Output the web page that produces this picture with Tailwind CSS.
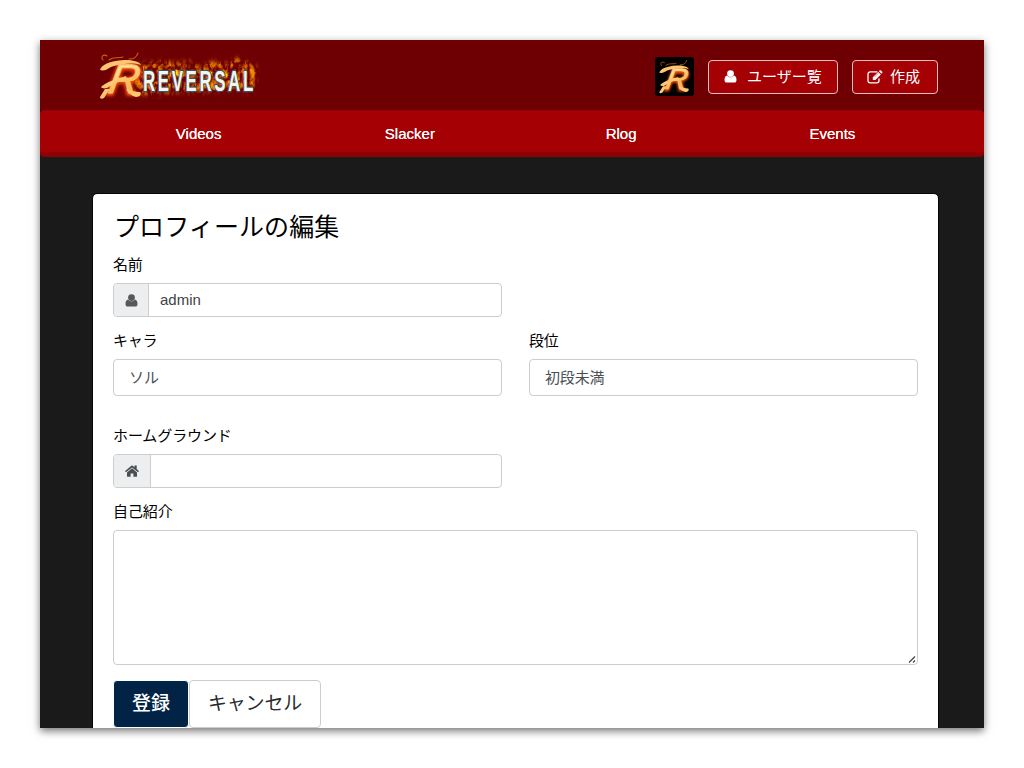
<!DOCTYPE html>
<html lang="ja">
<head>
<meta charset="utf-8">
<title>プロフィールの編集 - REVERSAL</title>
<script src="https://cdn.jsdelivr.net/npm/@tailwindcss/browser@4"></script>
</head>
<body class="h-[768px] overflow-hidden bg-white p-10 font-['Liberation_Sans','Noto_Sans_CJK_JP',sans-serif] text-[15px] text-black">
<svg width="0" height="0" class="absolute">
  <defs>
    <linearGradient id="fire" x1="0" y1="0" x2="0.3" y2="1"><stop offset="0" stop-color="#ffb04c"/><stop offset=".35" stop-color="#ffe09a"/><stop offset=".65" stop-color="#ffc060"/><stop offset="1" stop-color="#ffab48"/></linearGradient>
    <filter id="glow" x="-30%" y="-30%" width="160%" height="160%"><feGaussianBlur stdDeviation="1.8"/></filter>
    <filter id="flames" x="-10%" y="-20%" width="120%" height="140%" color-interpolation-filters="sRGB">
      <feTurbulence type="turbulence" baseFrequency="0.13 0.09" numOctaves="3" seed="8" result="n"/>
      <feColorMatrix in="n" type="matrix" values=".8 0 0 0 .58  1 0 0 0 .1  0 0 0 0 .01  0 0 0 3.500 -.55" result="c"/>
      <feGaussianBlur in="SourceAlpha" stdDeviation="2.5" result="m"/>
      <feComposite in="c" in2="m" operator="in"/>
    </filter>
    <symbol id="emblem" viewBox="0 0 46 50">
      <g fill="none" stroke="#c9600f" stroke-linecap="round" stroke-width="1.100">
        <path d="M5 9C2 5 6 3 9 5M11 9C16 5 19 8 25 6M31 8C36 8 38 7 40 2"/>
      </g>
      <g transform="translate(7 43) skewX(-10)">
        <text x="2" y="0" font-family="Liberation Sans, sans-serif" font-size="41" font-style="italic" textLength="30" lengthAdjust="spacingAndGlyphs" fill="#f04a08" stroke="#f04a08" stroke-width="4" filter="url(#glow)" aria-hidden="true">R</text>
        <text x="2" y="-1" font-family="Liberation Sans, sans-serif" font-size="41" font-style="italic" textLength="30" lengthAdjust="spacingAndGlyphs" fill="url(#fire)" stroke="#ffc670" stroke-width="1">R</text>
      </g>
      <path fill="#ffc470" d="M2 19C3 14 11 10 26 9c9-.5 16 2 17 5-9-3-18-1-27 1-5 1-8 6-14 4Z"/>
      <path fill="#ffc870" d="M4 35C12 29 21 28 28 25l1 3c-7 2-14 5-20 9-4 1-7 0-5-2ZM2 46l5-8 5 0-6 9c-2 1-4 1-4-1ZM28 38c5 1 9 3 14 3 2 2 0 5-4 5-4-1-8-4-10-8Z"/>
    </symbol>
    <symbol id="user" viewBox="0 0 13 15"><g fill="currentColor"><circle cx="6.5" cy="4.6" r="3.4"/><path d="M3.1 6.5C1.3 6.7.5 8.6.5 11c0 1.7.8 2.6 2.2 2.6h7.6c1.4 0 2.2-.9 2.2-2.6 0-2.4-.8-4.3-2.6-4.5-1.8 2.4-5 2.4-6.8 0Z"/></g></symbol>
  </defs>
</svg>
<div class="flex h-[688px] w-[944px] flex-col overflow-hidden bg-[#1a1a1a] shadow-[0_3px_8px_rgba(0,0,0,0.55)]">
  <header class="flex h-[70px] shrink-0 items-center bg-[#6e0004] pt-[3px] pr-[46px] pl-[55px]">
    <svg class="-mt-[3px]" width="170" height="56" viewBox="0 0 170 56" role="img" aria-label="REVERSAL">
      <path fill="#fff" filter="url(#flames)" d="M38 22 50 15 61 17 71 12 81 16 93 14 105 20 115 13 130 16 144 10 159 15 162 27 158 45 145 41 118 45 86 45 55 48 35 46Z"/>
      <use href="#emblem" x="3" y="4" width="46" height="50"/>
      <g transform="translate(48 43.500) scale(.58 1)"><text x="0" y="0" font-family="Liberation Sans, sans-serif" font-size="29" font-weight="700" textLength="190" lengthAdjust="spacing" fill="#f4f4f1" stroke="#40535c" stroke-width="2.400" paint-order="stroke">REVERSAL</text></g>
    </svg>
    <div class="ml-auto flex h-[39px] w-[39px] items-center justify-center rounded-[3px] bg-black"><svg width="35" height="36"><use href="#emblem" width="35" height="36"/></svg></div>
    <button class="ml-[14px] flex h-[34px] w-[130px] items-center rounded border border-[#e4bfc0] bg-[#a50004] pl-[15px] text-white">
      <svg width="13" height="15"><use href="#user"/></svg>
      <span class="ml-[10px] pt-[2px] whitespace-nowrap">ユーザー覧</span>
    </button>
    <button class="ml-[14px] flex h-[34px] w-[86px] items-center rounded border border-[#e4bfc0] bg-[#a50004] pl-[14px] text-white">
      <svg class="mr-px" width="16" height="14" viewBox="0 0 16 14" fill="none" stroke="currentColor"><path stroke-width="1.3" stroke-linecap="round" d="M10 1.8H3.2A2.2 2.2 0 0 0 1 4v6.6a2.2 2.2 0 0 0 2.2 2.2h6.6a2.2 2.2 0 0 0 2.2-2.2V9"/><path fill="currentColor" stroke="none" d="M5.800 7.300 11.200 1.900l2.600 2.600-5.400 5.400H5.800ZM11.900 1.200l.7-.7c.4-.4 1-.4 1.400 0l1.200 1.200c.4.4.4 1 0 1.400l-.7.7Z"/><path stroke="#a50004" stroke-width=".5" d="m7.600 7 3.700-3.700"/></svg>
      <span class="ml-[6px] pt-[2px] whitespace-nowrap">作成</span>
    </button>
  </header>
  <nav class="grid h-[47px] shrink-0 grid-cols-4 rounded-[4px] border-t border-b-[5px] border-t-[#970004] border-b-[#8e0004] bg-[#a50004] pr-[46px] pl-[53px] text-center leading-[45px] text-white [text-shadow:0_0_0.5px_white]">
    <a>Videos</a><a>Slacker</a><a>Rlog</a><a>Events</a>
  </nav>
  <main class="mx-[53px] mt-[37px] h-[560px] w-[845px] shrink-0 rounded bg-white px-[20px] pt-[16px] outline outline-black/80">
    <h1 class="h-[45px] pl-px text-[25px] leading-[34px] tracking-[0.1px]">プロフィールの編集</h1>
    <form class="grid grid-cols-[389px_389px] gap-x-[27px]">
      <div class="col-span-2 h-[76px]">
        <label class="block h-[28px] leading-[20px] tracking-[-0.15px]">名前</label>
        <div class="flex h-[34px] w-[389px] overflow-hidden rounded border border-[#cccdce]">
          <span class="flex w-[35px] items-center justify-center border-r border-[#cccdce] bg-[#eceeef] text-[#55595c]"><svg width="13" height="15"><use href="#user"/></svg></span>
          <span class="pl-[11px] leading-[32px] text-[#3e4246]">admin</span>
        </div>
      </div>
      <div class="h-[95px]">
        <label class="block h-[28px] leading-[20px] tracking-[-0.3px]">キャラ</label>
        <div class="h-[37px] rounded border border-[#cccdce] pl-[15px] leading-[35px] text-[#4b5056]">ソル</div>
      </div>
      <div class="h-[95px]">
        <label class="block h-[28px] leading-[20px] tracking-[-0.15px]">段位</label>
        <div class="h-[37px] rounded border border-[#cccdce] pl-[15px] leading-[35px] tracking-[-0.15px] text-[#4b5056]">初段未満</div>
      </div>
      <div class="col-span-2 h-[76px]">
        <label class="block h-[28px] leading-[20px] tracking-[-0.1px]">ホームグラウンド</label>
        <div class="flex h-[34px] w-[389px] overflow-hidden rounded border border-[#cccdce]">
          <span class="flex w-[37px] items-center justify-center border-r border-[#cccdce] bg-[#eceeef] text-[#4a4e51]"><svg width="14" height="12" viewBox="0 0 14 12" fill="currentColor"><path d="M7 3.3 2 7.4v3.8c0 .4.2.6.6.6h3V8.4h2.8v3.4h3c.4 0 .6-.2.6-.6V7.4Z"/><path d="m.2 6.400.6.7c.2.1.3.1.5 0L7 2.400l5.700 4.700c.2.1.3.1.5 0l.6-.7c.1-.2.1-.4 0-.5L11.700 4V.7c0-.2-.1-.3-.3-.3H9.800c-.2 0-.3.1-.3.3v1.500L7.700.7C7.300.4 6.700.4 6.300.7L.2 5.900c-.1.1-.1.3 0 .5Z"/></svg></span>
        </div>
      </div>
      <div class="col-span-2 h-[178px]">
        <label class="block h-[28px] leading-[20px] tracking-[-0.1px]">自己紹介</label>
        <div class="flex h-[135px] w-[805px] items-end justify-end rounded border border-[#cccdce]"><svg width="10" height="10" viewBox="0 0 10 10" fill="none" stroke="#444" stroke-width="1.200"><path d="m2 8.500 6-6M6 8.500 8 6.500"/></svg></div>
      </div>
      <div class="col-span-2 flex text-[19px]">
        <button type="button" class="h-[48px] w-[76px] rounded border border-white bg-[#012345] pt-px font-medium text-white">登録</button>
        <button type="button" class="h-[48px] w-[132px] rounded border border-[#cccdce] bg-white pt-px tracking-[-0.2px] text-[#292b2c]">キャンセル</button>
      </div>
    </form>
  </main>
</div>
</body>
</html>
